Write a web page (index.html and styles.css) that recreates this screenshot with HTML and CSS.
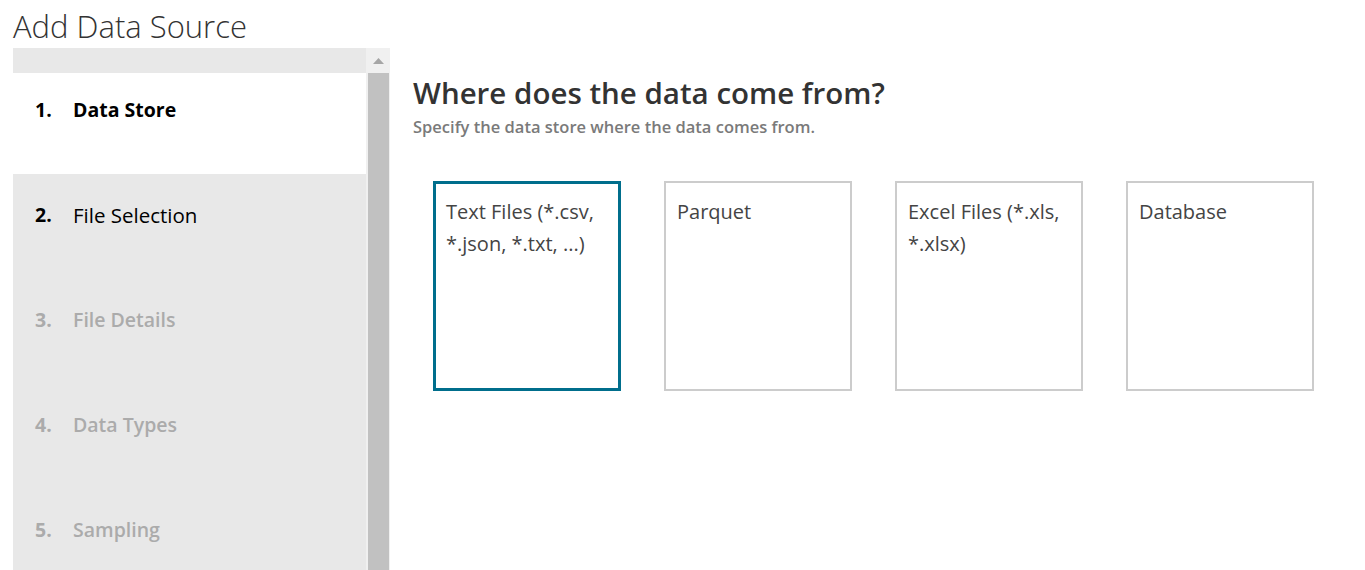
FILE: index.html
```html
<!DOCTYPE html>
<html lang="en">
<head>
<meta charset="utf-8">
<title>Add Data Source</title>
<link rel="stylesheet" href="styles.css">
</head>
<body>
<h1 class="page-title">Add Data Source</h1>
<div class="layout">
  <aside class="sidebar">
    <div class="steps">
      <div class="steps-top"></div>
      <div class="step step-current step-first"><span class="step-num">1.</span><span class="step-label">Data Store</span></div>
      <div class="step step-next"><span class="step-num">2.</span><span class="step-label">File Selection</span></div>
      <div class="step step-disabled"><span class="step-num">3.</span><span class="step-label">File Details</span></div>
      <div class="step step-disabled"><span class="step-num">4.</span><span class="step-label">Data Types</span></div>
      <div class="step step-disabled"><span class="step-num">5.</span><span class="step-label">Sampling</span></div>
    </div>
    <div class="scrollbar">
      <div class="scroll-up"><svg width="11" height="6" viewBox="0 0 11 6"><polygon points="5.5,0 11,6 0,6" fill="#a6a6a6"/></svg></div>
      <div class="scroll-track"><div class="scroll-thumb"></div></div>
    </div>
  </aside>
  <main class="content">
    <h2 class="question">Where does the data come from?</h2>
    <p class="hint">Specify the data store where the data comes from.</p>
    <div class="cards">
      <div class="card card-selected">Text Files (*.csv, *.json, *.txt, ...)</div>
      <div class="card">Parquet</div>
      <div class="card">Excel Files (*.xls, *.xlsx)</div>
      <div class="card">Database</div>
    </div>
  </main>
</div>
</body>
</html>
```

FILE: styles.css
```css
html, body {
  margin: 0;
  padding: 0;
  height: 570px;
  overflow: hidden;
  background: #ffffff;
}
body {
  padding: 0 0 0 13px;
  font-family: "Open Sans", "Noto Sans", "Liberation Sans", sans-serif;
  color: #333333;
}
.page-title {
  margin: 0;
  padding-top: 6px;
  font-size: 31px;
  line-height: 40px;
  font-weight: 300;
  color: #333333;
  box-sizing: border-box;
  height: 48px;
}
.layout {
  display: flex;
  align-items: flex-start;
  height: 522px;
  overflow: hidden;
}
.sidebar {
  display: flex;
  width: 377px;
  height: 522px;
  flex: none;
}
.steps {
  width: 353px;
  background: #e8e8e8;
  display: flex;
  flex-direction: column;
  overflow: hidden;
}
.steps-top {
  height: 25px;
  flex: none;
}
.step {
  height: 105px;
  flex: none;
  box-sizing: border-box;
  padding: 28px 0 0 22px;
  display: flex;
  font-size: 19.5px;
  line-height: 26px;
}
.step-first {
  height: 101px;
  padding-top: 24px;
}
.step-num {
  width: 38px;
  font-weight: 700;
}
.step-current {
  background: #ffffff;
  color: #000000;
}
.step-current .step-label {
  font-weight: 700;
}
.step-next {
  color: #000000;
}
.step-next .step-label {
  font-size: 20.5px;
}
.step-disabled {
  color: #ababab;
  font-weight: 600;
}
.scrollbar {
  width: 24px;
  background: #f0f0f0;
  display: flex;
  flex-direction: column;
}
.scroll-up {
  height: 25px;
  display: flex;
  align-items: center;
  justify-content: center;
}
.scroll-track {
  flex: 1;
  padding: 0 1px 0 2px;
  display: flex;
}
.scroll-thumb {
  flex: 1;
  background: #c1c1c1;
}
.content {
  flex: 1;
  padding: 26px 0 0 23px;
}
.question {
  margin: 0;
  font-size: 29.5px;
  line-height: 38px;
  font-weight: 600;
  color: #333333;
}
.hint {
  margin: 4px 0 0;
  font-size: 16.5px;
  line-height: 22px;
  font-weight: 600;
  color: #7a7a7a;
}
.cards {
  display: flex;
  gap: 43px;
  margin: 43px 0 0 20px;
}
.card {
  width: 188px;
  height: 210px;
  box-sizing: border-box;
  border: 2px solid #cccccc;
  padding: 13px 11px 11px;
  font-size: 20px;
  line-height: 32px;
  color: #444444;
}
.card-selected {
  border: 3px solid #006e8c;
  padding: 12px 10px 10px;
}
```
